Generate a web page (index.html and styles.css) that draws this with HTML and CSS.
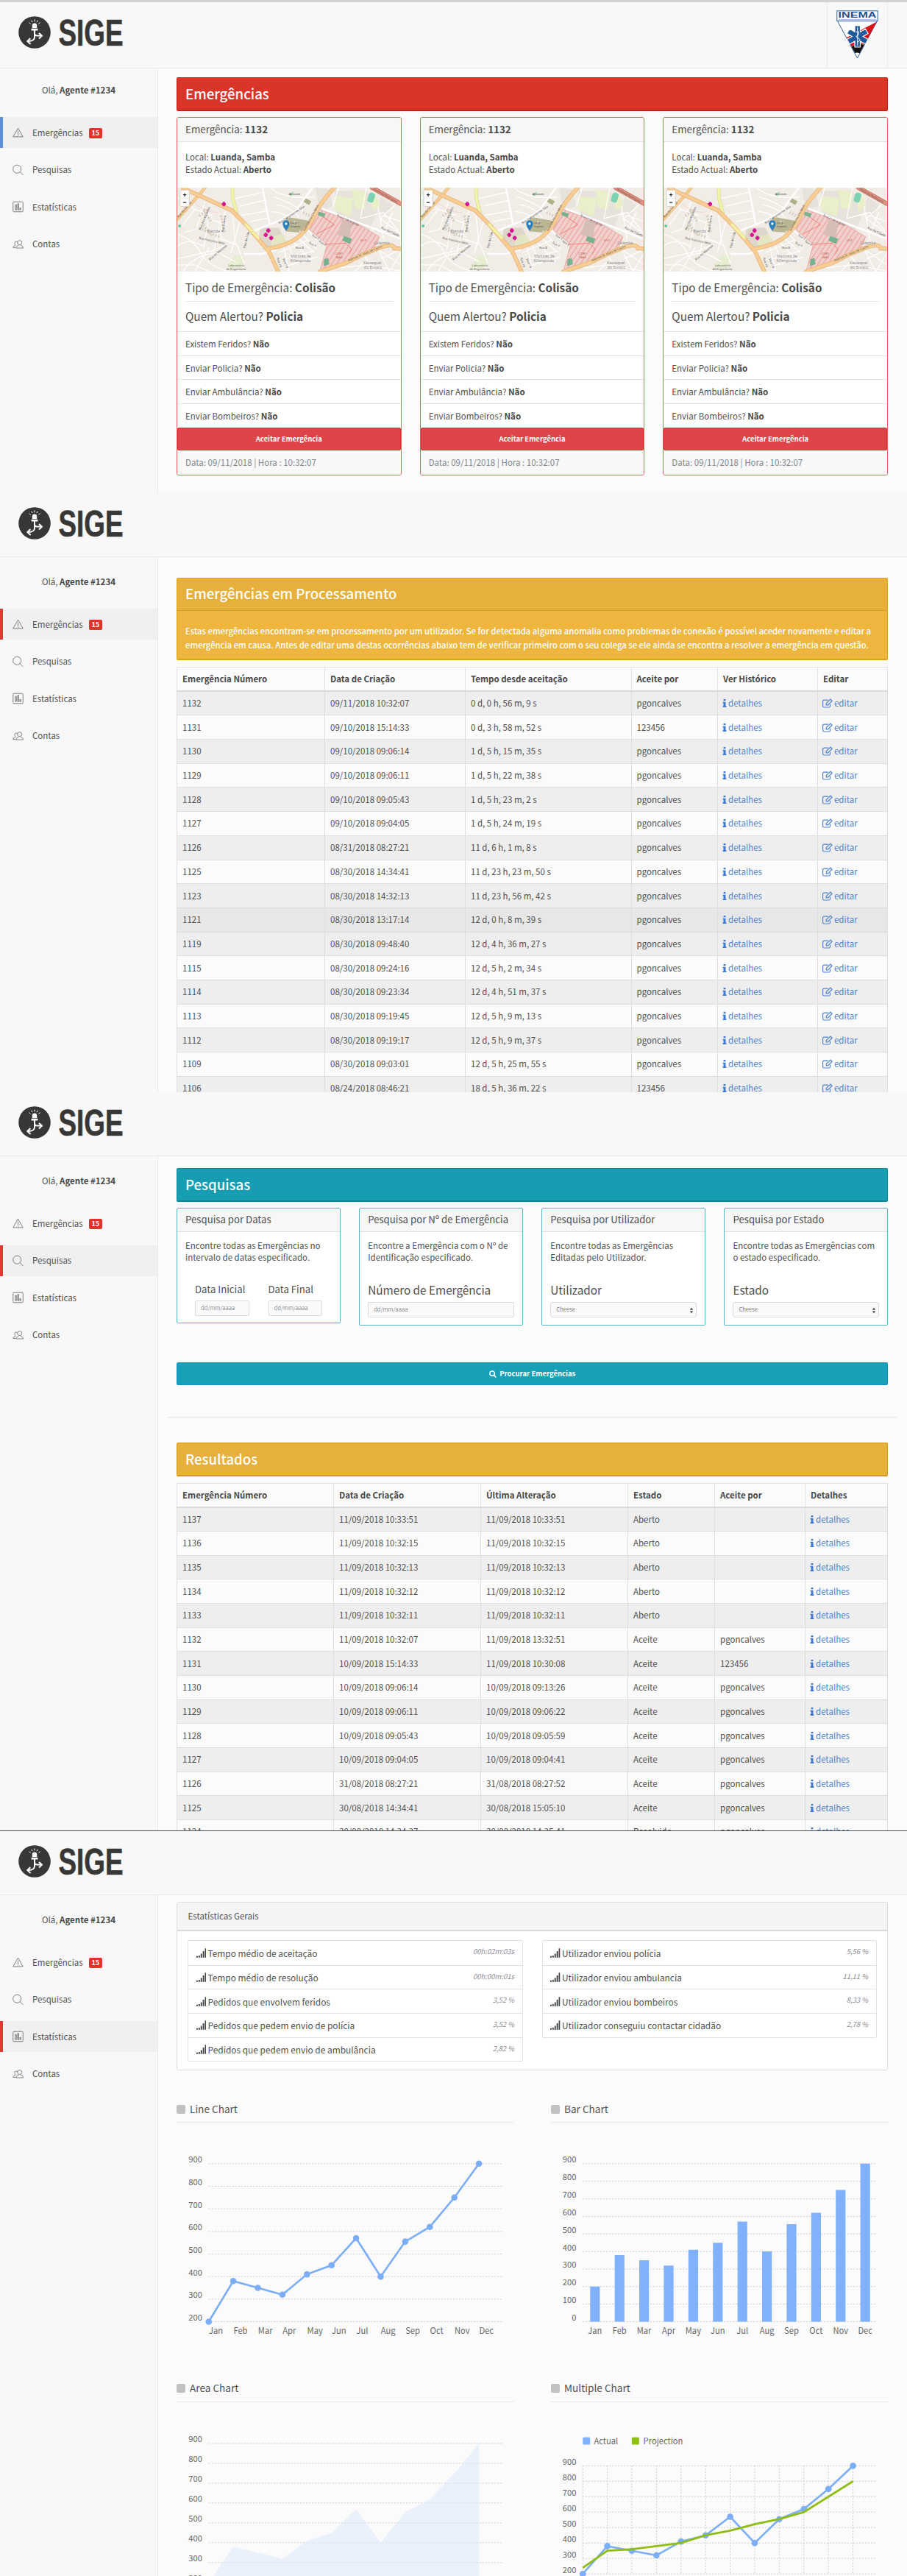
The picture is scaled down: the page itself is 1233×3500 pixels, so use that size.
FILE: index.html
```html
<!DOCTYPE html>
<html lang="pt">
<head>
<meta charset="utf-8">
<title>SIGE</title>
<link rel="stylesheet" href="styles.css">
</head>
<body>
<svg class="defs" width="0" height="0" aria-hidden="true">
  <symbol id="logo" viewBox="0 0 150 46">
    <circle cx="22" cy="23" r="21.8" fill="#373735"/>
    <g fill="none" stroke="#fff" stroke-width="1.9">
      <path d="M22 19v10.500q0 5.500-9 5.500M22 24.500q0 3 3.500 3h5.500"/>
      <path d="M16.300 31l-4 4 4.300 4M28 24l4 3.600-4 3.800" stroke-width="2"/>
      <path d="M22 5.500v2.800M17.800 6.700l1.200 2.400M26.200 6.700l-1.200 2.400M14.600 9.700l2 1.600M29.400 9.700l-2 1.600" stroke-width="1"/>
    </g>
    <path d="M18.800 17v-3.600a3.200 3 0 0 1 6.400 0V17zM17.600 17.800h8.800v2.600h-8.800z" fill="#fff"/>
    <text x="54.500" y="40.500" class="logo-word" textLength="88" lengthAdjust="spacingAndGlyphs">SIGE</text>
  </symbol>
  <symbol id="i-alert" viewBox="0 0 16 16"><path d="M8 1.800L15.200 14.300H.8zM8 6v5.500M8 12.300v1" /></symbol>
  <symbol id="i-search" viewBox="0 0 16 16"><circle cx="6.600" cy="6.600" r="5.900"/><path d="M10.800 10.800l4.700 4.700"/></symbol>
  <symbol id="i-stats" viewBox="0 0 16 16"><rect x=".8" y=".8" width="14.400" height="14.400" rx="1"/><path d="M4 12.500V5h1.600v7.500zM7.400 12.500V3.500H9v9zM10.600 12.500V9.500h1.500v3z"/></symbol>
  <symbol id="i-users" viewBox="0 0 17 16"><circle cx="11" cy="5.300" r="3.400"/><path d="M5.500 13.700q-.3-3.200 3.700-4l.3-1M12.600 8.700l.3 1q3.900.8 3.600 4H5.500M8 5q-.6-1.500-2.300-1.500-2.500 0-2.500 2.700 0 1.700 1.200 2.500v.9Q1 10.300.8 13h4"/></symbol>
  <symbol id="i-info" viewBox="0 0 6 14"><path d="M1.500 1h3v2.500h-3zM.4 5h4.200v6h1v1.800H.4V11h1V6.800h-1z"/></symbol>
  <symbol id="i-edit" viewBox="0 0 14 13"><path d="M10.500 7.800v2.400q0 1.800-1.800 1.800H2.400Q.6 12 .6 10.200V4Q.6 2.200 2.400 2.200h5.400" fill="none" stroke="currentColor" stroke-width="1.200"/><path d="M10.900 1l2.200 2.200-5.600 5.600H5.300V6.600z" fill="none" stroke="currentColor" stroke-width="1.200"/></symbol>
  <symbol id="i-signal" viewBox="0 0 14 13"><path d="M0 11h2v2H0zM3 10h2v3H3zM6 7.500h2V13H6zM9 4h2v9H9zM12 0h2v13h-2z"/></symbol>
  <pattern id="hatch" width="14" height="14" patternUnits="userSpaceOnUse" patternTransform="rotate(35)"><rect width="14" height="14" fill="#efd0cb"/><path d="M3 0v14" stroke="#f0999a" stroke-width="2.500"/></pattern>
  <symbol id="map" viewBox="0 0 768 272" preserveAspectRatio="none">
    <rect width="768" height="272" fill="#f1ede6"/>
    <path d="M475 0l45 5 15 55-45 15zM540 10h110l40 60-30 70-110-40zM700 30l40 25-20 40-30-20z" fill="#e7e2dc"/>
    <path d="M545 25l60 10-10 60-55-25zM600 5l50 10-5 55-35-5zM660 30l25-8 12 40-25 12z" fill="#e9efc8"/>
    <path d="M195 220l35-2-5 40-55 5z" fill="#e6edd0"/>
    <path d="M285 130l65 0 20 40-55 30-35-35z" fill="#ded6cb"/><path d="M320 160l40-10 22 30-55 18z" fill="#e4e5c2"/>
    <path d="M375 94l82 14-22 38-62-4z" fill="#b9b793"/><path d="M437 32l24 12-8 12-22-12z" fill="#aeb08a"/>
    <path d="M485 69l120 40 90 50-15 35-80 40-110 38 25-88-60-48z" fill="url(#hatch)" stroke="#e58d8a" stroke-width="1.500"/>
    <path d="M505 184l75-4 20 20-10 15M480 80l60 40-60 30" fill="none" stroke="#f26e6e" stroke-width="2"/>
    <path d="M568 102l32 14-8 50-42-14z" fill="#d6bdb6"/>
    <path d="M487 78l22 6-4 12-22-7zM573 157l28 9-8 16-26-10zM505 232l14-4 4 20-20 6z" fill="#76b190"/>
    <rect x="656" y="16" width="22" height="32" rx="9" fill="#7bd3b4" transform="rotate(18 667 32)"/>
    <circle cx="8" cy="124" r="5" fill="#66c5a3"/><path d="M385 22q14-12 16-8l-10 16z" fill="#a8d8b0"/>
    <g fill="none" stroke="#fff">
      <path d="M293 0l25 122M250 145l100-38 55-30 60-77M498 68l270 98M230 215h60l55-15" stroke-width="6"/>
      <path d="M330 30q60 15 120 60M338 55q50 5 80 42M325 78q30 0 60 20M320 0q50 40 150 30M215 60l90-20M200 35l95-20M220 90l90-15M250 110l60-12M0 30l60 40-40 50M60 70l60 20M95 45l-30 90-40 10M85 95l85 25M75 130l80 30M110 90l-20 110M150 100l-25 110M0 150q60 20 80 60t90 60M0 190q40-30 90 0M0 230l120-25 50-20M20 272q40-60 130-60M60 272l50-80M165 75l-20 90 60 20 25 60M190 90l10 90M215 110l-30 100M150 215l50 25M0 250h60l50 22M365 190l20 82M380 180l30 70M395 172l70 70M350 210l100-40M360 235l110-30M370 255l110-30M400 150l70 60M420 140l60 60M440 130l40 40M555 0l-20 60M650 0l-20 100M768 40l-70 60 70 50M630 100l80-20 50 60M690 60l20 110M740 80l-30 70M768 110l-60-20M600 240l90-40 40 72M640 215l40 57M690 200l78 50M560 260l90-10 118 20M700 230l68-30M730 272l38-60M610 272l30-30" stroke-width="3"/>
    </g>
    <path d="M75 92l28-20M90 70l25 40M75 130l70 30M150 90l12 55M90 120l28 35M400 110l18 8M432 80l24 12" stroke="#dad1c5" stroke-width="9" stroke-dasharray="6 4"/>
    <g fill="none" stroke-linecap="round">
      <path d="M0 102L78 20 95 0" stroke="#e5b67b" stroke-width="11"/><path d="M0 102L78 20 95 0" stroke="#f8cb90" stroke-width="8"/>
      <path d="M190 0v32l14 50" stroke="#d9dc94" stroke-width="12"/><path d="M190 0v32l14 50" stroke="#f2f5a8" stroke-width="8"/>
      <path d="M20 2l80 34 88 38 52 50 35 38 40 45 32 65M310 198q80-10 120-50 30-30 42-60 20-40 68-88M490 272l90-28 60-28 62-24q40-12 44 4l22 2" stroke="#e6b37a" stroke-width="14"/>
      <path d="M20 2l80 34 88 38 52 50 35 38 40 45 32 65M310 198q80-10 120-50 30-30 42-60 20-40 68-88M490 272l90-28 60-28 62-24q40-12 44 4l22 2" stroke="#f8cd94" stroke-width="10"/>
      <path d="M236 120l42 42" stroke="#f2f3a2" stroke-width="9"/>
      <path d="M670 0l98 52" stroke="#c87466" stroke-width="15"/><path d="M670 0l98 52" stroke="#e58f7e" stroke-width="11"/>
      <path d="M50 40q40 40 90 40" stroke="#f5b6ae" stroke-width="1.500" stroke-dasharray="4 4"/>
    </g>
    <path d="M153 53h14M160 46v14M306 139h14M313 132v14M297 153h14M304 146v14M316 163h14M323 156v14" stroke="#d6138f" stroke-width="7"/>
    <g class="map-label">
      <text x="384" y="23">Alvalade</text><text x="103" y="146" class="map-area">Prenda</text>
      <text x="390" y="227" class="map-area">Martires de</text><text x="388" y="242" class="map-area">Kifangondo</text>
      <text x="676" y="183" class="map-area">Calemba</text><text x="640" y="247" class="map-area">Kassequel</text><text x="642" y="262" class="map-area">do Buraco</text>
      <text x="176" y="255">Laboratório</text><text x="168" y="267">de Engenharia</text><text x="389" y="117">Largo</text><text x="389" y="129">Soweto</text>
      <text transform="translate(4 98) rotate(-48)">Rua da Samba</text>
      <text transform="translate(80 138) rotate(-66)">Rua dos Mirantes</text><text transform="translate(74 166) rotate(12)">Rua Francisco Neto</text>
      <text transform="translate(158 145) rotate(-80)">Rua Cuanza</text><text transform="translate(112 236) rotate(-38)">Rua do Maxinde</text>
      <text transform="translate(234 196) rotate(-76)">Rua da Liga</text><text transform="translate(350 118) rotate(-32)">Rua Comandante Gika</text>
      <text transform="translate(438 142) rotate(-60)">Avenida Ho Chi Minh</text><text transform="translate(548 92) rotate(24)">Rua 21 de Agosto</text>
      <text transform="translate(672 6) rotate(28)">Deolinda Rodrigues</text><text transform="translate(588 240) rotate(-22)">Avenida M. Alves de Castro</text>
      <text transform="translate(700 132) rotate(24)">Rua da Cidade</text><text transform="translate(462 156) rotate(30)">Rua 3</text><text transform="translate(486 176) rotate(30)">Rua 2</text>
      <text transform="translate(452 180) rotate(30)">Rua 7</text><text transform="translate(408 198)">Rua 8</text><text transform="translate(342 228) rotate(72)">Rua 19</text><text transform="translate(362 232) rotate(65)">Rua 18</text>
      <text x="630" y="174" fill="#b65">GCP</text><text x="542" y="217" fill="#b65">CORP</text><text x="544" y="229" fill="#b65">TAAG</text>
    </g>
    <path d="M374 139q-11-14-11-22a11 11 0 0 1 22 0q0 8-11 22z" fill="#2a81c4" stroke="#1b6196"/><circle cx="374" cy="117" r="4" fill="#fff"/>
    <rect x="10" y="8" width="31" height="53" rx="4" fill="#fff" stroke="#cfcbc4" stroke-width="2"/><path d="M10 34h31" stroke="#ccc"/>
    <path d="M20 23h11M25.500 18v11M20 48h11" stroke="#222" stroke-width="2.500"/>
  </symbol>
</svg>

<section class="screen screen-emergencies">
  <header class="topbar"><svg class="logo"><use href="#logo"/></svg>
    <div class="agency">
      <svg width="57" height="66" viewBox="0 0 57 66">
        <path d="M1.500 14.500h54L28.500 65z" fill="#fff" stroke="#2a5f9e"/>
        <path d="M55 15.500L14 37l6.500 12q8-5 18-3z" fill="#d8121c"/><path d="M20.500 49.500q7-5 17.500-3l-6.500 12q-3-1.500-6-.500z" fill="#111"/>
        <path d="M25 21h7.500v8.200l7-4 3.700 6.300-7 4 7 4-3.700 6.500-7-4v8H25v-8l-7 4-3.700-6.500 7-4-7-4L18 25.200l7 4z" stroke="#fff" stroke-width="1.200" fill="#1e5a9c"/>
        <path d="M28.800 23v25M27 30q4-3 3.500 1t-3 4 2.500 3-2 5" fill="none" stroke="#fff"/>
        <rect x=".8" y=".8" width="55.400" height="13.600" fill="#fff" stroke="#2a5f9e" stroke-width="1"/>
        <text x="2.500" y="10" class="agency-name" textLength="52" lengthAdjust="spacingAndGlyphs">INEMA</text>
        <path d="M3 12.300h51" stroke="#88a6c8" stroke-width="1" stroke-dasharray="2 .6"/>
      </svg>
    </div>
  </header>
  <aside class="sidebar"><p class="user">Olá, <b>Agente #1234</b></p>
    <nav><a class="active blue"><svg><use href="#i-alert"/></svg>Emergências<span class="badge">15</span></a><a><svg><use href="#i-search"/></svg>Pesquisas</a><a><svg><use href="#i-stats"/></svg>Estatísticas</a><a><svg><use href="#i-users"/></svg>Contas</a></nav>
  </aside>
  <main>
    <h1 class="banner red">Emergências</h1>
    <div class="alerts">
      <article class="alert"><h2>Emergência: <b>1132</b></h2><p class="place">Local: <b>Luanda, Samba</b><br>Estado Actual: <b>Aberto</b></p><svg class="map"><use href="#map"/></svg>
        <div class="kind"><p>Tipo de Emergência: <b>Colisão</b></p><p>Quem Alertou? <b>Policia</b></p></div>
        <ul><li>Existem Feridos? <b>Não</b></li><li>Enviar Policia? <b>Não</b></li><li>Enviar Ambulância? <b>Não</b></li><li>Enviar Bombeiros? <b>Não</b></li></ul>
        <button class="accept">Aceitar Emergência</button><footer>Data: 09/11/2018 | Hora : 10:32:07</footer></article>
      <article class="alert"><h2>Emergência: <b>1132</b></h2><p class="place">Local: <b>Luanda, Samba</b><br>Estado Actual: <b>Aberto</b></p><svg class="map"><use href="#map"/></svg>
        <div class="kind"><p>Tipo de Emergência: <b>Colisão</b></p><p>Quem Alertou? <b>Policia</b></p></div>
        <ul><li>Existem Feridos? <b>Não</b></li><li>Enviar Policia? <b>Não</b></li><li>Enviar Ambulância? <b>Não</b></li><li>Enviar Bombeiros? <b>Não</b></li></ul>
        <button class="accept">Aceitar Emergência</button><footer>Data: 09/11/2018 | Hora : 10:32:07</footer></article>
      <article class="alert"><h2>Emergência: <b>1132</b></h2><p class="place">Local: <b>Luanda, Samba</b><br>Estado Actual: <b>Aberto</b></p><svg class="map"><use href="#map"/></svg>
        <div class="kind"><p>Tipo de Emergência: <b>Colisão</b></p><p>Quem Alertou? <b>Policia</b></p></div>
        <ul><li>Existem Feridos? <b>Não</b></li><li>Enviar Policia? <b>Não</b></li><li>Enviar Ambulância? <b>Não</b></li><li>Enviar Bombeiros? <b>Não</b></li></ul>
        <button class="accept">Aceitar Emergência</button><footer>Data: 09/11/2018 | Hora : 10:32:07</footer></article>
    </div>
  </main>
</section>

<section class="screen screen-processing">
  <header class="topbar"><svg class="logo"><use href="#logo"/></svg></header>
  <aside class="sidebar"><p class="user">Olá, <b>Agente #1234</b></p>
    <nav><a class="active"><svg><use href="#i-alert"/></svg>Emergências<span class="badge">15</span></a><a><svg><use href="#i-search"/></svg>Pesquisas</a><a><svg><use href="#i-stats"/></svg>Estatísticas</a><a><svg><use href="#i-users"/></svg>Contas</a></nav>
  </aside>
  <main>
    <div class="notice"><h1>Emergências em Processamento</h1><p>Estas emergências encontram-se em processamento por um utilizador. Se for detectada alguma anomalia como problemas de conexão é possível aceder novamente e editar a<br>emergência em causa. Antes de editar uma destas ocorrências abaixo tem de verificar primeiro com o seu colega se ele ainda se encontra a resolver a emergência em questão.</p></div>
    <table class="grid processing">
      <colgroup><col class="p1"><col class="p2"><col class="p3"><col class="p4"><col class="p5"><col></colgroup>
      <thead><tr><th>Emergência Número</th><th>Data de Criação</th><th>Tempo desde aceitação</th><th>Aceite por</th><th>Ver Histórico</th><th>Editar</th></tr></thead>
      <tbody>
      <tr><td>1132</td><td>09/11/2018 10:32:07</td><td>0 d, 0 h, 56 m, 9 s</td><td>pgoncalves</td><td><a><svg class="info"><use href="#i-info"/></svg>detalhes</a></td><td><a><svg class="edit"><use href="#i-edit"/></svg>editar</a></td></tr>
      <tr><td>1131</td><td>09/10/2018 15:14:33</td><td>0 d, 3 h, 58 m, 52 s</td><td>123456</td><td><a><svg class="info"><use href="#i-info"/></svg>detalhes</a></td><td><a><svg class="edit"><use href="#i-edit"/></svg>editar</a></td></tr>
      <tr><td>1130</td><td>09/10/2018 09:06:14</td><td>1 d, 5 h, 15 m, 35 s</td><td>pgoncalves</td><td><a><svg class="info"><use href="#i-info"/></svg>detalhes</a></td><td><a><svg class="edit"><use href="#i-edit"/></svg>editar</a></td></tr>
      <tr><td>1129</td><td>09/10/2018 09:06:11</td><td>1 d, 5 h, 22 m, 38 s</td><td>pgoncalves</td><td><a><svg class="info"><use href="#i-info"/></svg>detalhes</a></td><td><a><svg class="edit"><use href="#i-edit"/></svg>editar</a></td></tr>
      <tr><td>1128</td><td>09/10/2018 09:05:43</td><td>1 d, 5 h, 23 m, 2 s</td><td>pgoncalves</td><td><a><svg class="info"><use href="#i-info"/></svg>detalhes</a></td><td><a><svg class="edit"><use href="#i-edit"/></svg>editar</a></td></tr>
      <tr><td>1127</td><td>09/10/2018 09:04:05</td><td>1 d, 5 h, 24 m, 19 s</td><td>pgoncalves</td><td><a><svg class="info"><use href="#i-info"/></svg>detalhes</a></td><td><a><svg class="edit"><use href="#i-edit"/></svg>editar</a></td></tr>
      <tr><td>1126</td><td>08/31/2018 08:27:21</td><td>11 d, 6 h, 1 m, 8 s</td><td>pgoncalves</td><td><a><svg class="info"><use href="#i-info"/></svg>detalhes</a></td><td><a><svg class="edit"><use href="#i-edit"/></svg>editar</a></td></tr>
      <tr><td>1125</td><td>08/30/2018 14:34:41</td><td>11 d, 23 h, 23 m, 50 s</td><td>pgoncalves</td><td><a><svg class="info"><use href="#i-info"/></svg>detalhes</a></td><td><a><svg class="edit"><use href="#i-edit"/></svg>editar</a></td></tr>
      <tr><td>1123</td><td>08/30/2018 14:32:13</td><td>11 d, 23 h, 56 m, 42 s</td><td>pgoncalves</td><td><a><svg class="info"><use href="#i-info"/></svg>detalhes</a></td><td><a><svg class="edit"><use href="#i-edit"/></svg>editar</a></td></tr>
      <tr class="hovered"><td>1121</td><td>08/30/2018 13:17:14</td><td>12 d, 0 h, 8 m, 39 s</td><td>pgoncalves</td><td><a><svg class="info"><use href="#i-info"/></svg>detalhes</a></td><td><a><svg class="edit"><use href="#i-edit"/></svg>editar</a></td></tr>
      <tr><td>1119</td><td>08/30/2018 09:48:40</td><td>12 d, 4 h, 36 m, 27 s</td><td>pgoncalves</td><td><a><svg class="info"><use href="#i-info"/></svg>detalhes</a></td><td><a><svg class="edit"><use href="#i-edit"/></svg>editar</a></td></tr>
      <tr><td>1115</td><td>08/30/2018 09:24:16</td><td>12 d, 5 h, 2 m, 34 s</td><td>pgoncalves</td><td><a><svg class="info"><use href="#i-info"/></svg>detalhes</a></td><td><a><svg class="edit"><use href="#i-edit"/></svg>editar</a></td></tr>
      <tr><td>1114</td><td>08/30/2018 09:23:34</td><td>12 d, 4 h, 51 m, 37 s</td><td>pgoncalves</td><td><a><svg class="info"><use href="#i-info"/></svg>detalhes</a></td><td><a><svg class="edit"><use href="#i-edit"/></svg>editar</a></td></tr>
      <tr><td>1113</td><td>08/30/2018 09:19:45</td><td>12 d, 5 h, 9 m, 13 s</td><td>pgoncalves</td><td><a><svg class="info"><use href="#i-info"/></svg>detalhes</a></td><td><a><svg class="edit"><use href="#i-edit"/></svg>editar</a></td></tr>
      <tr><td>1112</td><td>08/30/2018 09:19:17</td><td>12 d, 5 h, 9 m, 37 s</td><td>pgoncalves</td><td><a><svg class="info"><use href="#i-info"/></svg>detalhes</a></td><td><a><svg class="edit"><use href="#i-edit"/></svg>editar</a></td></tr>
      <tr><td>1109</td><td>08/30/2018 09:03:01</td><td>12 d, 5 h, 25 m, 55 s</td><td>pgoncalves</td><td><a><svg class="info"><use href="#i-info"/></svg>detalhes</a></td><td><a><svg class="edit"><use href="#i-edit"/></svg>editar</a></td></tr>
      <tr><td>1106</td><td>08/24/2018 08:46:21</td><td>18 d, 5 h, 36 m, 22 s</td><td>123456</td><td><a><svg class="info"><use href="#i-info"/></svg>detalhes</a></td><td><a><svg class="edit"><use href="#i-edit"/></svg>editar</a></td></tr>
      </tbody>
    </table>
  </main>
</section>

<section class="screen screen-search">
  <header class="topbar"><svg class="logo"><use href="#logo"/></svg></header>
  <aside class="sidebar"><p class="user">Olá, <b>Agente #1234</b></p>
    <nav><a><svg><use href="#i-alert"/></svg>Emergências<span class="badge">15</span></a><a class="active"><svg><use href="#i-search"/></svg>Pesquisas</a><a><svg><use href="#i-stats"/></svg>Estatísticas</a><a><svg><use href="#i-users"/></svg>Contas</a></nav>
  </aside>
  <main>
    <h1 class="banner teal">Pesquisas</h1>
    <div class="filters">
      <article class="filter dates"><h2>Pesquisa por Datas</h2><p>Encontre todas as Emergências no<br>intervalo de datas especificado.</p>
        <div class="fields"><div class="field"><span class="label">Data Inicial</span><span class="input">dd/mm/aaaa</span></div><div class="field"><span class="label">Data Final</span><span class="input">dd/mm/aaaa</span></div></div></article>
      <article class="filter"><h2>Pesquisa por Nº de Emergência</h2><p>Encontre a Emergência com o Nº de<br>Identificação especificado.</p>
        <div class="field"><span class="label">Número de Emergência</span><span class="input">dd/mm/aaaa</span></div></article>
      <article class="filter"><h2>Pesquisa por Utilizador</h2><p>Encontre todas as Emergências<br>Editadas pelo Utilizador.</p>
        <div class="field"><span class="label">Utilizador</span><span class="input select">Cheese<svg viewBox="0 0 6 10"><path d="M3 .5l2.500 3.600h-5zM3 9.500l2.500-3.600h-5z"/></svg></span></div></article>
      <article class="filter"><h2>Pesquisa por Estado</h2><p>Encontre todas as Emergências com<br>o estado especificado.</p>
        <div class="field"><span class="label">Estado</span><span class="input select">Cheese<svg viewBox="0 0 6 10"><path d="M3 .5l2.500 3.600h-5zM3 9.500l2.500-3.600h-5z"/></svg></span></div></article>
    </div>
    <button class="find"><svg viewBox="0 0 11 11"><circle cx="4.500" cy="4.500" r="3.500"/><path d="M7 7l3.300 3.300"/></svg>Procurar Emergências</button>
    <hr>
    <h1 class="banner amber">Resultados</h1>
    <table class="grid results">
      <colgroup><col class="r1"><col class="r2"><col class="r3"><col class="r4"><col class="r5"><col></colgroup>
      <thead><tr><th>Emergência Número</th><th>Data de Criação</th><th>Última Alteração</th><th>Estado</th><th>Aceite por</th><th>Detalhes</th></tr></thead>
      <tbody>
      <tr><td>1137</td><td>11/09/2018 10:33:51</td><td>11/09/2018 10:33:51</td><td>Aberto</td><td></td><td><a><svg class="info"><use href="#i-info"/></svg>detalhes</a></td></tr>
      <tr><td>1136</td><td>11/09/2018 10:32:15</td><td>11/09/2018 10:32:15</td><td>Aberto</td><td></td><td><a><svg class="info"><use href="#i-info"/></svg>detalhes</a></td></tr>
      <tr><td>1135</td><td>11/09/2018 10:32:13</td><td>11/09/2018 10:32:13</td><td>Aberto</td><td></td><td><a><svg class="info"><use href="#i-info"/></svg>detalhes</a></td></tr>
      <tr><td>1134</td><td>11/09/2018 10:32:12</td><td>11/09/2018 10:32:12</td><td>Aberto</td><td></td><td><a><svg class="info"><use href="#i-info"/></svg>detalhes</a></td></tr>
      <tr><td>1133</td><td>11/09/2018 10:32:11</td><td>11/09/2018 10:32:11</td><td>Aberto</td><td></td><td><a><svg class="info"><use href="#i-info"/></svg>detalhes</a></td></tr>
      <tr><td>1132</td><td>11/09/2018 10:32:07</td><td>11/09/2018 13:32:51</td><td>Aceite</td><td>pgoncalves</td><td><a><svg class="info"><use href="#i-info"/></svg>detalhes</a></td></tr>
      <tr><td>1131</td><td>10/09/2018 15:14:33</td><td>11/09/2018 10:30:08</td><td>Aceite</td><td>123456</td><td><a><svg class="info"><use href="#i-info"/></svg>detalhes</a></td></tr>
      <tr><td>1130</td><td>10/09/2018 09:06:14</td><td>10/09/2018 09:13:26</td><td>Aceite</td><td>pgoncalves</td><td><a><svg class="info"><use href="#i-info"/></svg>detalhes</a></td></tr>
      <tr><td>1129</td><td>10/09/2018 09:06:11</td><td>10/09/2018 09:06:22</td><td>Aceite</td><td>pgoncalves</td><td><a><svg class="info"><use href="#i-info"/></svg>detalhes</a></td></tr>
      <tr><td>1128</td><td>10/09/2018 09:05:43</td><td>10/09/2018 09:05:59</td><td>Aceite</td><td>pgoncalves</td><td><a><svg class="info"><use href="#i-info"/></svg>detalhes</a></td></tr>
      <tr><td>1127</td><td>10/09/2018 09:04:05</td><td>10/09/2018 09:04:41</td><td>Aceite</td><td>pgoncalves</td><td><a><svg class="info"><use href="#i-info"/></svg>detalhes</a></td></tr>
      <tr><td>1126</td><td>31/08/2018 08:27:21</td><td>31/08/2018 08:27:52</td><td>Aceite</td><td>pgoncalves</td><td><a><svg class="info"><use href="#i-info"/></svg>detalhes</a></td></tr>
      <tr><td>1125</td><td>30/08/2018 14:34:41</td><td>30/08/2018 15:05:10</td><td>Aceite</td><td>pgoncalves</td><td><a><svg class="info"><use href="#i-info"/></svg>detalhes</a></td></tr>
      <tr><td>1124</td><td>30/08/2018 14:34:37</td><td>30/08/2018 14:35:41</td><td>Resolvido</td><td>pgoncalves</td><td><a><svg class="info"><use href="#i-info"/></svg>detalhes</a></td></tr>
      </tbody>
    </table>
  </main>
</section>

<section class="screen screen-stats">
  <header class="topbar"><svg class="logo"><use href="#logo"/></svg></header>
  <aside class="sidebar"><p class="user">Olá, <b>Agente #1234</b></p>
    <nav><a><svg><use href="#i-alert"/></svg>Emergências<span class="badge">15</span></a><a><svg><use href="#i-search"/></svg>Pesquisas</a><a class="active"><svg><use href="#i-stats"/></svg>Estatísticas</a><a><svg><use href="#i-users"/></svg>Contas</a></nav>
  </aside>
  <main>
    <div class="panel"><h2>Estatísticas Gerais</h2>
      <div class="lists">
        <ul><li><svg><use href="#i-signal"/></svg>Tempo médio de aceitação<em>00h:02m:03s</em></li><li><svg><use href="#i-signal"/></svg>Tempo médio de resolução<em>00h:00m:01s</em></li><li><svg><use href="#i-signal"/></svg>Pedidos que envolvem feridos<em>3,52 %</em></li><li><svg><use href="#i-signal"/></svg>Pedidos que pedem envio de polícia<em>3,52 %</em></li><li><svg><use href="#i-signal"/></svg>Pedidos que pedem envio de ambulância<em>2,82 %</em></li></ul>
        <ul><li><svg><use href="#i-signal"/></svg>Utilizador enviou polícia<em>5,56 %</em></li><li><svg><use href="#i-signal"/></svg>Utilizador enviou ambulancia<em>11,11 %</em></li><li><svg><use href="#i-signal"/></svg>Utilizador enviou bombeiros<em>8,33 %</em></li><li><svg><use href="#i-signal"/></svg>Utilizador conseguiu contactar cidadão<em>2,78 %</em></li></ul>
      </div>
    </div>
    <div class="charts">
      <figure><figcaption>Line Chart</figcaption>
        <svg viewBox="0 0 458 343.500">
          <path class="rule" d="M43.700 55.800h400.500M43.700 86.500h400.500M43.700 117.100h400.500M43.700 147.800h400.500M43.700 178.500h400.500M43.700 209.200h400.500M43.700 239.800h400.500M43.700 270.500h400.500"/>
          <g class="ylab"><text x="35" y="54.300">900</text><text x="35" y="85">800</text><text x="35" y="115.600">700</text><text x="35" y="146.300">600</text><text x="35" y="177">500</text><text x="35" y="207.700">400</text><text x="35" y="238.300">300</text><text x="35" y="269">200</text></g>
          <g class="xlab"><text x="44" y="286.800">Jan</text><text x="77.400" y="286.800">Feb</text><text x="110.800" y="286.800">Mar</text><text x="144.200" y="286.800">Apr</text><text x="177.600" y="286.800">May</text><text x="211" y="286.800">Jun</text><text x="244.400" y="286.800">Jul</text><text x="277.800" y="286.800">Aug</text><text x="311.200" y="286.800">Sep</text><text x="344.600" y="286.800">Oct</text><text x="378" y="286.800">Nov</text><text x="411.400" y="286.800">Dec</text></g>
          <polyline class="series" points="43.700,270.500 77.100,215.300 110.500,224.500 143.900,233.700 177.300,206.100 210.700,193.800 244.100,157 277.500,209.200 310.900,161.600 344.300,141.700 377.700,101.800 411.100,55.800"/>
        </svg></figure>
      <figure><figcaption>Bar Chart</figcaption>
        <svg viewBox="0 0 458 343.500">
          <path class="rule" d="M43.200 55.800h400M43.200 79.700h400M43.200 103.500h400M43.200 127.400h400M43.200 151.200h400M43.200 175.100h400M43.200 198.900h400M43.200 222.800h400M43.200 246.600h400M43.200 270.500h400"/>
          <g class="ylab"><text x="34.500" y="54.300">900</text><text x="34.500" y="78.200">800</text><text x="34.500" y="102">700</text><text x="34.500" y="125.900">600</text><text x="34.500" y="149.700">500</text><text x="34.500" y="173.600">400</text><text x="34.500" y="197.400">300</text><text x="34.500" y="221.300">200</text><text x="34.500" y="245.100">100</text><text x="34.500" y="269">0</text></g>
          <g class="xlab mid"><text x="59.800" y="286.800">Jan</text><text x="93.200" y="286.800">Feb</text><text x="126.600" y="286.800">Mar</text><text x="160" y="286.800">Apr</text><text x="193.400" y="286.800">May</text><text x="226.800" y="286.800">Jun</text><text x="260.200" y="286.800">Jul</text><text x="293.600" y="286.800">Aug</text><text x="327" y="286.800">Sep</text><text x="360.400" y="286.800">Oct</text><text x="393.800" y="286.800">Nov</text><text x="427.200" y="286.800">Dec</text></g>
          <path class="bars" d="M59.800 270.500V222.800M93.200 270.500V179.900M126.600 270.500V187M160 270.500V194.200M193.400 270.500V172.700M226.800 270.500V163.200M260.200 270.500V134.600M293.600 270.500V175.100M327 270.500V138.100M360.400 270.500V122.600M393.800 270.500V91.600M427.200 270.500V55.800"/>
        </svg></figure>
      <figure><figcaption>Area Chart</figcaption>
        <svg viewBox="0 0 458 343.500">
          <path class="rule" d="M43.700 55.900h400.500M43.700 82.900h400.500M43.700 109.900h400.500M43.700 136.800h400.500M43.700 163.800h400.500M43.700 190.800h400.500M43.700 217.800h400.500M43.700 244.800h400.500"/>
          <g class="ylab"><text x="35" y="54.400">900</text><text x="35" y="81.400">800</text><text x="35" y="108.400">700</text><text x="35" y="135.300">600</text><text x="35" y="162.300">500</text><text x="35" y="189.300">400</text><text x="35" y="216.300">300</text><text x="35" y="243.300">200</text></g>
          <polygon class="area" points="43.700,244.800 77.100,196.200 110.500,204.300 143.900,212.400 177.300,188.100 210.700,177.400 244.100,145 277.500,190.800 310.900,149 344.300,131.500 377.700,96.400 411.100,55.900 411.100,244.800"/>
        </svg></figure>
      <figure><figcaption>Multiple Chart</figcaption>
        <svg viewBox="0 0 458 343.500">
          <rect x="43.200" y="47.500" width="10" height="10" rx="1.500" fill="#80b1fa"/><rect x="109.800" y="47.500" width="10" height="10" rx="1.500" fill="#8fc013"/>
          <g class="xlab"><text x="58.400" y="57">Actual</text><text x="125.600" y="57">Projection</text></g>
          <path class="rule" d="M43.200 86.200h400M43.200 107.200h400M43.200 128.200h400M43.200 149.200h400M43.200 170.200h400M43.200 191.200h400M43.200 212.200h400M43.200 233.200h400"/>
          <path class="rule" d="M43.200 86.200v147M76.600 86.200v147M110 86.200v147M143.400 86.200v147M176.800 86.200v147M210.200 86.200v147M243.600 86.200v147M277 86.200v147M310.400 86.200v147M343.800 86.200v147M377.200 86.200v147M410.600 86.200v147"/>
          <g class="ylab"><text x="34.500" y="84.700">900</text><text x="34.500" y="105.700">800</text><text x="34.500" y="126.700">700</text><text x="34.500" y="147.700">600</text><text x="34.500" y="168.700">500</text><text x="34.500" y="189.700">400</text><text x="34.500" y="210.700">300</text><text x="34.500" y="231.700">200</text></g>
          <polyline class="series" points="43.200,233.200 76.600,195.400 110,201.700 143.400,208 176.800,189.100 210.200,180.700 243.600,155.500 277,191.200 310.400,158.700 343.800,145 377.200,117.700 410.600,86.200"/>
          <polyline class="projection" points="43.200,224.800 76.600,201.700 110,199.600 143.400,195.400 176.800,191.200 210.200,180.700 243.600,174.400 277,165.600 310.400,158.700 343.800,149.200 377.200,128.200 410.600,107.200"/>
        </svg></figure>
    </div>
  </main>
</section>
<svg class="defs" width="0" height="0" aria-hidden="true"><defs><marker id="dot" markerUnits="userSpaceOnUse" markerWidth="10" markerHeight="10" refX="5" refY="5"><circle cx="5" cy="5" r="4.300" fill="#7badf9"/></marker></defs></svg>
</body>
</html>
```
FILE: styles.css
```css
* { box-sizing: border-box; margin: 0; padding: 0; }
body {
  width: 1233px;
  background: #fbfbfb;
  color: #505050;
  font: 11.5px/17px "Noto Sans CJK SC", "Noto Sans", sans-serif;
}
b, th { font-weight: 700; color: #474747; }
ul { list-style: none; }
.defs { position: absolute; }

/* page frame */
.screen {
  display: grid;
  grid-template: 87px 1fr / 215px 1fr;
  overflow: hidden;
}
.screen-emergencies { height: 670px; grid-template-rows: 93px 1fr; }
.screen-processing { height: 814px; }
.screen-search { height: 1004px; border-bottom: 1px solid #4c4c4c; }
.screen-stats { height: 1012px; }
.topbar {
  grid-column: 1 / 3;
  display: flex;
  justify-content: space-between;
  background: #f8f8f8;
  border-bottom: 1px solid #e9e9e9;
  padding: 18px 26px 0 25px;
}
.screen-emergencies .topbar { border-top: 3px solid #d2d2d2; }
.logo { width: 150px; height: 46px; }
.logo-word { font: 700 50px "Liberation Sans", sans-serif; fill: #373735; stroke: #373735; stroke-width: .6; }
.agency {
  width: 83px;
  margin-top: -18px;
  padding: 11px 12px 0;
  border: solid #ececec;
  border-width: 0 1px;
}
.agency-name { font: 700 10px "Liberation Sans", sans-serif; fill: #1e4f8e; }

/* sidebar */
.sidebar { background: #f8f8f8; border-right: 1px solid #e9e9e9; }
.user { height: 70px; padding-top: 25px; text-align: center; }
.screen-emergencies .user { height: 66px; padding-top: 21px; }
nav { display: grid; gap: 8.6px; }
nav a {
  display: flex;
  align-items: center;
  height: 42px;
  padding: 0 0 0 13px;
  border-left: 4px solid transparent;
}
nav a.active { background: #f0f0f0; border-color: #de3a30; }
nav a.blue { border-color: #5b8edb; }
nav svg { width: 15px; height: 16px; margin-right: 12px; fill: none; stroke: #757575; stroke-width: 1; }
.badge {
  width: 18px;
  height: 14px;
  margin: 2px 0 0 8px;
  border-radius: 2px;
  background: #df342a;
  color: #fff;
  font-size: 9px;
  font-weight: 700;
  line-height: 13px;
  text-align: center;
}

main { padding: 12px 26px 0 25px; }

/* title banners */
.banner {
  height: 46px;
  padding-left: 11px;
  border: 1px solid;
  border-radius: 2px;
  border-bottom-width: 2px;
  color: #fff;
  font-size: 18.600px;
  font-weight: 500;
  line-height: 41px;
}
.banner.red { background: #d93529; border-color: #c3221a; }
.banner.teal { background: #179db2; border-color: #0e8799; }
.banner.amber { background: #e7b03b; border-color: #d09a24; }
.screen-search main { padding-top: 16px; }

/* emergency cards */
.alerts { display: grid; grid-template-columns: repeat(3, 1fr); gap: 25px; margin-top: 8px; }
.alert { height: 487px; border: 1px solid #ea6058; border-radius: 3px; background: #fff; overflow: hidden; }
.alert h2 {
  height: 33px;
  padding-left: 11px;
  border-bottom: 1px solid #e2e2e2;
  background: #f7f7f7;
  font-size: 13.400px;
  font-weight: 400;
  line-height: 31px;
}
.place { height: 62px; padding: 12px 11px 0; }
.map { display: block; width: 100%; height: 114px; }
.map-label { font: 10px "Noto Sans", sans-serif; fill: #555; }
.map-area { font-size: 13px; fill: #8b8b90; }
.kind { height: 81px; padding: 0 11px; font-size: 15.300px; }
.kind p { height: 41px; line-height: 42px; border-bottom: 1px solid #e6e6e6; }
.kind p + p { height: 40px; line-height: 39px; border: 0; }
.alert li { height: 32.700px; padding-left: 11px; border-top: 1px solid #e4e4e4; line-height: 33px; }
.accept {
  display: block;
  width: 100%;
  height: 31px;
  border: 1px solid #d23036;
  border-radius: 2px;
  background: #de4448;
  color: #fff;
  font: 700 9.500px/27px "Noto Sans CJK SC", sans-serif;
}
.alert footer { height: 34px; padding-left: 11px; background: #f8f8f8; color: #80878c; line-height: 33px; }

/* processing notice */
.screen-processing main { padding-top: 28px; }
.notice { height: 112px; border: 1px solid #dfa11e; border-bottom-width: 2px; border-radius: 2px; background: #eeb63e; color: #fff; }
.notice h1 {
  height: 44px;
  padding-left: 11px;
  border-bottom: 1px solid #cf9c2d;
  background: #e7b03b;
  font-size: 18.600px;
  font-weight: 500;
  line-height: 40px;
}
.notice p { padding: 18px 0 0 11px; font-size: 11.280px; font-weight: 500; line-height: 19px; white-space: nowrap; }

/* tables */
.grid { width: 967px; table-layout: fixed; border-collapse: collapse; }
.grid.processing { margin-top: 9px; }
.grid.results { margin-top: 8.500px; }
.p1 { width: 201px; } .p2 { width: 191px; } .p3 { width: 225.500px; } .p4 { width: 117.500px; } .p5 { width: 136px; }
.r1 { width: 213px; } .r2 { width: 200px; } .r3 { width: 200px; } .r4 { width: 118px; } .r5 { width: 123px; }
.grid th, .grid td { height: 32.700px; padding: 0 0 0 7px; border: 1px solid #dedede; line-height: 17px; text-align: left; vertical-align: middle; }
.grid th { border-color: #e2e2e2; border-bottom: 2px solid #dadada; }
.grid tbody tr:nth-child(odd) { background: #eee; }
.grid tbody tr.hovered { background: #e7e7e7; }
.grid a { display: flex; align-items: center; color: #4f83d1; }
.grid svg { fill: #3f78d0; }
.info { width: 6px; height: 13px; margin: 0 2px 0 -1px; }
.edit { width: 14px; height: 13px; margin: 0 2px 0 -1px; }

/* search filters */
.filters { display: grid; grid-template-columns: repeat(4, 1fr); gap: 25.600px; align-items: start; height: 218px; padding-top: 8px; }
.filter { height: 160px; border: 1px solid #59b6c6; border-radius: 2px; background: #fff; white-space: nowrap; }
.filter.dates { height: 157px; }
.filter h2 { height: 32px; padding-left: 11px; border-bottom: 1px solid #dedede; background: #f7f7f7; font-size: 13.200px; font-weight: 400; line-height: 30px; }
.filter p { height: 66px; padding: 10px 11px 0; line-height: 16px; }
.filter .field { padding: 0 11px; }
.label { display: block; height: 29px; font-size: 15.300px; line-height: 25px; }
.input { display: flex; justify-content: space-between; height: 21px; padding: 0 7px; border: 1px solid #dcdcdc; border-radius: 2px; background: #fafafa; color: #8f9499; font-size: 7.600px; line-height: 18px; }
.select { color: #777; border-radius: 3px; padding-right: 3px; }
.select svg { width: 6px; height: 9px; margin-top: 6px; fill: #555; }
.fields { display: flex; gap: 26px; padding-left: 24px; }
.dates .field { width: 73.500px; padding: 0; }
.dates .label { height: 27px; font-size: 13.200px; line-height: 23px; }
.find {
  display: flex;
  align-items: center;
  justify-content: center;
  width: 100%;
  height: 31px;
  padding-bottom: 2px;
  border: 1px solid #1b8fc0;
  border-radius: 2px;
  background: #16a1b8;
  color: #fff;
  font: 700 9.500px/16px "Noto Sans CJK SC", sans-serif;
}
.find svg { width: 10px; height: 10px; margin: 3px 4.500px 0 0; fill: none; stroke: #fff; stroke-width: 1.700; }
hr { margin: 43px -12px 34px; border: 0; border-top: 1px solid #e4e4e4; }

/* statistics */
.screen-stats main { padding-top: 9px; }
.panel { height: 229px; border: 1px solid #dcdcdc; border-radius: 3px; background: #fff; }
.panel h2 { height: 39px; padding-left: 14.500px; border-bottom: 2px solid #d9d9d9; background: #f4f4f4; font-size: 11.500px; font-weight: 400; line-height: 36px; }
.lists { display: grid; grid-template-columns: 455.500px 455px; gap: 26px; align-items: start; padding: 12px 14px; }
.lists ul { border: 1px solid #e2e2e2; border-radius: 2px; }
.lists li { display: flex; align-items: center; height: 32.700px; padding: 0 10.500px; border-top: 1px solid #e4e4e4; font-size: 11.900px; }
.lists li:first-child { border-top: 0; }
.lists svg { width: 13.500px; height: 13px; margin: 0 2.500px 0 0; fill: #444; }
.lists em { margin: -3px 0 0 auto; color: #87898f; font-size: 9.500px; }
.charts { display: grid; grid-template-columns: 458px 458px; gap: 0 51px; margin-top: 35px; }
figcaption { display: flex; align-items: center; height: 36px; padding-bottom: 1px; border-bottom: 1px solid #e6e6e6; font-size: 13.600px; }
figcaption::before { content: ""; width: 12px; height: 12px; margin: 1px 6px 0 0; border-radius: 2px; background: #c1c1c1; }
figure svg { display: block; width: 458px; height: 343.500px; }
.rule { fill: none; stroke: #ccc; stroke-width: 1; stroke-dasharray: 2 2; }
.ylab, .xlab { font-size: 11.200px; fill: #666; }
.ylab { text-anchor: end; }
.xlab.mid { text-anchor: middle; }
.series { fill: none; stroke: #7badf9; stroke-width: 2.600; marker-start: url(#dot); marker-mid: url(#dot); marker-end: url(#dot); }
.projection { fill: none; stroke: #8fbd12; stroke-width: 2.800; }
.bars { stroke: #80b1fa; stroke-width: 13.200; }
.area { fill: #dfe9fb; fill-opacity: .55; }
```
